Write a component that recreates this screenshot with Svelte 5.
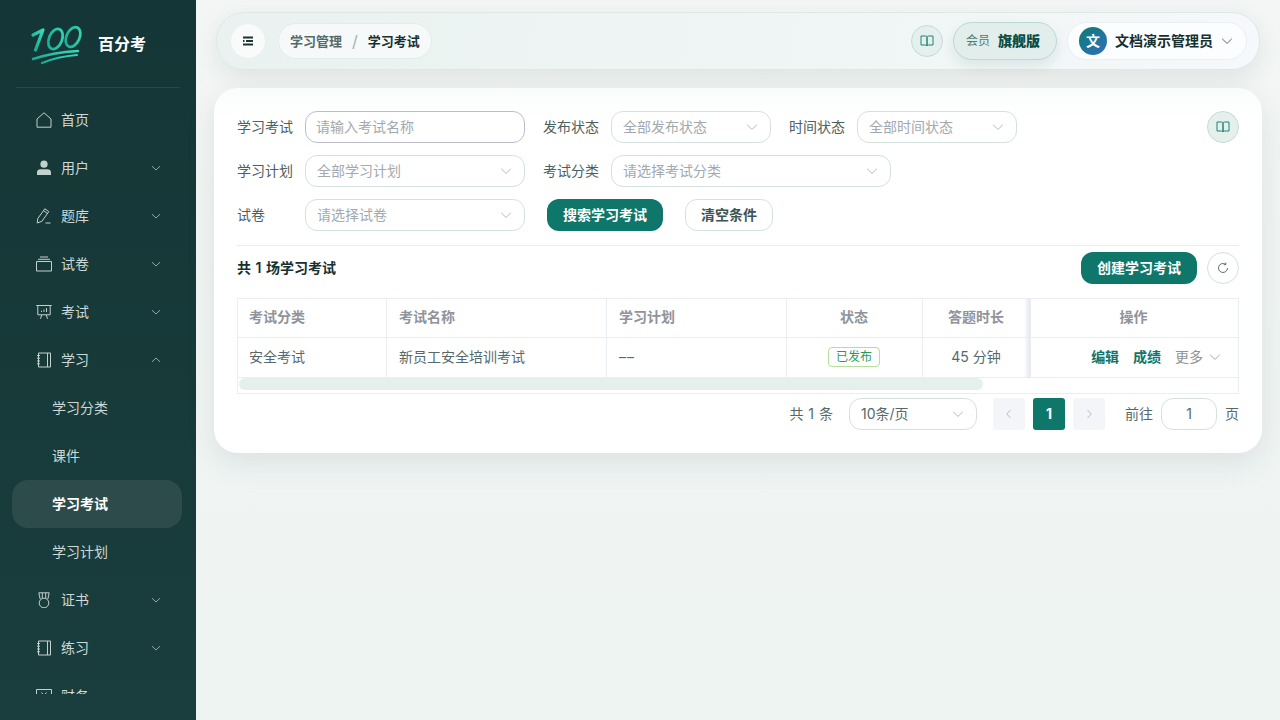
<script>
  const nav = [
    { label: '首页', icon: 'home' },
    { label: '用户', icon: 'user', arrow: 'down' },
    { label: '题库', icon: 'pen', arrow: 'down' },
    { label: '试卷', icon: 'box', arrow: 'down' },
    { label: '考试', icon: 'board', arrow: 'down' },
    { label: '学习', icon: 'note', arrow: 'up' },
    { label: '学习分类', sub: true },
    { label: '课件', sub: true },
    { label: '学习考试', sub: true, active: true },
    { label: '学习计划', sub: true },
    { label: '证书', icon: 'medal', arrow: 'down' },
    { label: '练习', icon: 'note', arrow: 'down' },
    { label: '财务', icon: 'money', arrow: 'down' }
  ];

  const cols = [
    { title: '考试分类', w: 149 },
    { title: '考试名称', w: 220 },
    { title: '学习计划', w: 180 },
    { title: '状态', w: 136, center: true },
    { title: '答题时长', w: 108, center: true },
    { title: '操作', w: 207, center: true }
  ];
</script>

{#snippet chevron(cls = '')}
  <svg class="chev {cls}" viewBox="0 0 12 12"><path d="M1.200 3.800 6 8.400l4.800-4.600" /></svg>
{/snippet}

{#snippet book()}
  <svg class="book" viewBox="0 0 14 14"><path d="M1 2h4.500C6.400 2 7 2.500 7 3.300V12c0-.6-.6-1-1.500-1H1zM13 2H8.500C7.600 2 7 2.500 7 3.300V12c0-.6.6-1 1.500-1H13z" /></svg>
{/snippet}

{#snippet navIcon(name)}
  <svg class="nav-icon" viewBox="0 0 16 16">
    {#if name === 'home'}
      <path d="M1 7 8 .8 15 7v8.200H1z" />
    {:else if name === 'user'}
      <circle class="solid" cx="8" cy="4.200" r="3.600" />
      <path class="solid" d="M1 15v-2.600C1 10.300 2.600 9.200 4.500 9.200h7c1.900 0 3.500 1.100 3.500 3.200V15z" />
    {:else if name === 'pen'}
      <path d="M1.200 15 1.800 10.500 8.800.8l4 2.800-6.900 9.700zM7.500 2.700l4 2.800M9.500 15h5" />
    {:else if name === 'box'}
      <path d="M.5 5.500h15V15H.5zM2 3.300h12M4 1h8" />
    {:else if name === 'board'}
      <path d="M.3 1.500h15.400M1.800 1.500v9.300h12.400V1.500M4.500 14.800l1.200-4M11.500 14.800l-1.200-4M5.500 8V6.800M8 8V5.500M10.500 8V4" />
    {:else if name === 'note'}
      <path d="M2.500 1h12v14h-12zM11.500 1v14M1 3.500h3M1 6.200h3M1 9h3M1 11.800h3" />
    {:else if name === 'medal'}
      <circle cx="8" cy="11" r="4.800" />
      <path d="M4.200 7.200 2.800.8h10.400l-1.400 6.400M6.300 1v5M9.700 1v5" />
    {:else if name === 'money'}
      <path d="M.5 1.500h15v12H.5zM5.500 4.500 8 7.500l2.500-3M5.500 8h5M8 7.500V11" />
    {/if}
  </svg>
{/snippet}

<div class="layout">
  <aside class="sidebar">
    <div class="brand">
      <svg class="logo" viewBox="0 0 52 40">
        <defs>
          <linearGradient id="lg" x1="0" y1="1" x2="1" y2="0">
            <stop offset="0" stop-color="#17a98f" />
            <stop offset="1" stop-color="#3ad6bb" />
          </linearGradient>
        </defs>
        <g fill="none" stroke="url(#lg)" stroke-linecap="round" stroke-linejoin="round">
          <path stroke-width="3.200" d="M3 11 13 6 5.500 26" />
          <ellipse stroke-width="2.700" cx="25.500" cy="15" rx="6.500" ry="10.500" transform="rotate(22 25.500 15)" />
          <ellipse stroke-width="2.700" cx="43" cy="13" rx="6.500" ry="10.500" transform="rotate(24 43 13)" />
          <path stroke-width="2.400" d="M3 35C18 30 32 28 48 27" />
          <path stroke-width="2" d="M12 39C24 34 35 32 47 31" />
        </g>
      </svg>
      <span class="brand-name">百分考</span>
    </div>
    <nav class="menu">
      {#each nav as item}
        <div class="item" class:sub={item.sub} class:active={item.active}>
          {#if item.icon}{@render navIcon(item.icon)}{/if}
          <span class="item-label">{item.label}</span>
          {#if item.arrow}{@render chevron(item.arrow === 'up' ? 'up' : '')}{/if}
        </div>
      {/each}
    </nav>
  </aside>

  <main class="main">
    <header class="topbar">
      <button class="round-btn menu-btn" aria-label="菜单">
        <svg viewBox="0 0 12 12"><path d="M1 2.500h10M4 6h7M1 9.500h10M1 6h1.500" /></svg>
      </button>
      <div class="crumbs">
        <span class="crumb-parent">学习管理</span>
        <span class="crumb-sep">/</span>
        <span class="crumb-current">学习考试</span>
      </div>
      <div class="top-right">
        <button class="book-btn" aria-label="文档">{@render book()}</button>
        <div class="vip"><span class="vip-tag">会员</span><strong>旗舰版</strong></div>
        <div class="account">
          <span class="avatar">文</span>
          <span class="account-name">文档演示管理员</span>
          {@render chevron()}
        </div>
      </div>
    </header>

    <section class="card">
      <div class="filters">
        <div class="filter-row">
          <label class="field-label">学习考试</label>
          <div class="control focus w220">请输入考试名称</div>
          <label class="field-label">发布状态</label>
          <div class="control w160">全部发布状态{@render chevron()}</div>
          <label class="field-label">时间状态</label>
          <div class="control w160">全部时间状态{@render chevron()}</div>
          <button class="book-btn push" aria-label="文档">{@render book()}</button>
        </div>
        <div class="filter-row">
          <label class="field-label">学习计划</label>
          <div class="control w220">全部学习计划{@render chevron()}</div>
          <label class="field-label">考试分类</label>
          <div class="control w280">请选择考试分类{@render chevron()}</div>
        </div>
        <div class="filter-row">
          <label class="field-label">试卷</label>
          <div class="control w220">请选择试卷{@render chevron()}</div>
          <div class="actions">
            <button class="btn primary">搜索学习考试</button>
            <button class="btn ghost">清空条件</button>
          </div>
        </div>
      </div>

      <div class="summary">
        <span class="count">共 1 场学习考试</span>
        <div class="summary-actions">
          <button class="btn primary">创建学习考试</button>
          <button class="refresh" aria-label="刷新">
            <svg viewBox="0 0 12 12"><path d="M10.500 6A4.500 4.500 0 1 1 8.600 2.300M8.800.6v2.100H6.700" /></svg>
          </button>
        </div>
      </div>

      <div class="table-wrap">
        <table>
          <colgroup>
            {#each cols as c}<col style:width="{c.w}px" />{/each}
          </colgroup>
          <thead>
            <tr>
              {#each cols as c, i}
                <th class:center={c.center} class:fixed={i === 5}>{c.title}</th>
              {/each}
            </tr>
          </thead>
          <tbody>
            <tr>
              <td>安全考试</td>
              <td>新员工安全培训考试</td>
              <td><span class="dash">––</span></td>
              <td class="center"><span class="tag">已发布</span></td>
              <td class="center">45 分钟</td>
              <td class="fixed ops">
                <span class="link">编辑</span>
                <span class="link">成绩</span>
                <span class="more">更多{@render chevron()}</span>
              </td>
            </tr>
          </tbody>
        </table>
        <div class="scroll-track"><div class="scroll-thumb"></div></div>
      </div>

      <div class="pager">
        <span class="total">共 1 条</span>
        <div class="control page-size">10条/页{@render chevron()}</div>
        <div class="pages">
          <button class="page" aria-label="上一页"><svg viewBox="0 0 12 12"><path d="M7.500 2 3.800 6l3.700 4" /></svg></button>
          <button class="page on">1</button>
          <button class="page" aria-label="下一页"><svg viewBox="0 0 12 12"><path d="M4.500 2l3.700 4-3.700 4" /></svg></button>
        </div>
        <span class="goto">前往</span>
        <div class="page-input">1</div>
        <span class="goto-unit">页</span>
      </div>
    </section>
  </main>
</div>

<style>
  :global(body) {
    margin: 0;
    font-family: Inter, 'Noto Sans CJK SC', sans-serif;
    font-size: 14px;
    line-height: 20px;
    background: #eff4f3;
    overflow: hidden;
  }

  button {
    font: inherit;
    padding: 0;
    cursor: pointer;
  }

  .layout {
    display: flex;
    height: 720px;
    overflow: hidden;
  }

  /* sidebar */
  .sidebar {
    width: 196px;
    flex: none;
    background: linear-gradient(180deg, #153636, #193e3d);
    color: #cdd9d7;
    display: flex;
    flex-direction: column;
    height: 720px;
  }

  .brand {
    height: 87px;
    margin: 0 16px;
    padding-left: 14px;
    display: flex;
    align-items: center;
    gap: 16px;
    border-bottom: 1px solid #26494a;
    flex: none;
  }

  .logo {
    width: 52px;
    height: 40px;
  }

  .brand-name {
    color: #fff;
    font-size: 16px;
    font-weight: 700;
  }

  .menu {
    margin-top: 8px;
    height: 598px;
    overflow: hidden;
  }

  .item {
    height: 48px;
    margin: 0 14px 0 12px;
    padding: 0 21px 0 24px;
    display: flex;
    align-items: center;
    border-radius: 16px;
  }

  .item.sub {
    padding-left: 40px;
  }

  .item.active {
    background: #2c4b4a;
    color: #fff;
    font-weight: 600;
  }

  .item-label {
    flex: 1;
  }

  .nav-icon {
    width: 16px;
    height: 16px;
    margin-right: 9px;
    fill: none;
    stroke: #c3d0ce;
    stroke-width: 1;
    flex: none;
  }

  .nav-icon .solid {
    fill: #c3d0ce;
    stroke: none;
  }

  .chev {
    width: 12px;
    height: 12px;
    fill: none;
    stroke: currentColor;
    stroke-width: 1;
    flex: none;
  }

  .chev.up {
    transform: rotate(180deg);
  }

  .item .chev {
    width: 10px;
    height: 10px;
    color: #aebdbb;
  }

  /* main */
  .main {
    flex: 1;
    min-width: 0;
    padding: 12px 18px;
    background: linear-gradient(180deg, #f3f6f5, #eef4f2);
  }

  .topbar {
    height: 58px;
    box-sizing: border-box;
    margin: 0 2px 18px;
    padding: 0 12px 0 13px;
    display: flex;
    align-items: center;
    gap: 12px;
    border: 1px solid #dde8e6;
    border-radius: 28px;
    background: linear-gradient(100deg, #e9f2f0, #f1f6f6 70%, #f6f8fb);
    box-shadow: 0 8px 24px rgba(30, 60, 55, 0.09);
  }

  .round-btn {
    width: 36px;
    height: 36px;
    border: 1px solid #e9f0ef;
    border-radius: 50%;
    background: #f9fbfb;
    display: grid;
    place-items: center;
  }

  .menu-btn svg {
    width: 12px;
    height: 12px;
    fill: none;
    stroke: #1c3331;
    stroke-width: 1.800;
  }

  .crumbs {
    height: 36px;
    box-sizing: border-box;
    padding: 0 11px;
    display: flex;
    align-items: center;
    border: 1px solid #e3ecea;
    border-radius: 18px;
    background: #f5f9f9;
    font-size: 13px;
    font-weight: 600;
  }

  .crumb-parent {
    color: #56696a;
  }

  .crumb-sep {
    margin: 0 10px;
    color: #a3b0ae;
    font-weight: 400;
    font-size: 16px;
  }

  .crumb-current {
    color: #17302e;
  }

  .top-right {
    margin-left: auto;
    display: flex;
    align-items: center;
    gap: 10px;
  }

  .book-btn {
    width: 32px;
    height: 32px;
    border: 1px solid #c4dcd8;
    border-radius: 50%;
    background: #e5f0ed;
    display: grid;
    place-items: center;
    flex: none;
  }

  .book {
    width: 14px;
    height: 14px;
    fill: none;
    stroke: #1f8375;
    stroke-width: 1;
  }

  .vip {
    width: 104px;
    height: 38px;
    box-sizing: border-box;
    padding-left: 12px;
    display: flex;
    align-items: center;
    gap: 8px;
    border: 1px solid #bdd8d3;
    border-radius: 19px;
    background: #e2eeeb;
    box-shadow: 0 6px 14px rgba(20, 90, 80, 0.1);
    color: #0d4d44;
    font-weight: 700;
  }

  .vip-tag {
    color: #4c7b72;
    font-size: 12px;
    font-weight: 400;
  }

  .account {
    width: 180px;
    height: 38px;
    box-sizing: border-box;
    padding: 0 13px 0 11px;
    display: flex;
    align-items: center;
    gap: 8px;
    border: 1px solid #e9f0f0;
    border-radius: 19px;
    background: #fcfdfe;
    color: #17302e;
    font-weight: 600;
    white-space: nowrap;
  }

  .account .chev {
    color: #5c6d6c;
    margin-left: auto;
  }

  .avatar {
    width: 28px;
    height: 28px;
    border-radius: 50%;
    background: linear-gradient(135deg, #107a70, #2f70c0);
    color: #fff;
    font-weight: 700;
    display: grid;
    place-items: center;
    flex: none;
  }

  /* card */
  .card {
    height: 365px;
    box-sizing: border-box;
    padding: 23px 23px 0;
    border-radius: 24px;
    background: linear-gradient(180deg, #fafcfb, #fff 30px);
    box-shadow: 0 10px 30px rgba(30, 60, 55, 0.1);
  }

  .filters {
    display: flex;
    flex-direction: column;
    gap: 12px;
  }

  .filter-row {
    display: flex;
    align-items: center;
    height: 32px;
  }

  .field-label {
    width: 56px;
    margin-right: 12px;
    color: #4d6060;
    white-space: nowrap;
  }

  .control {
    height: 32px;
    box-sizing: border-box;
    padding: 0 12px 0 11px;
    margin-right: 18px;
    display: flex;
    align-items: center;
    justify-content: space-between;
    border: 1px solid #d5e1de;
    border-radius: 12px;
    color: #a2a9ae;
    background: #fff;
  }

  .control .chev {
    color: #b3bcbc;
  }

  .w160 { width: 160px; }
  .w220 { width: 220px; }
  .w280 { width: 280px; }

  .control.focus {
    border-color: #bdbccb;
    padding-left: 10px;
  }

  .push {
    margin-left: auto;
  }

  .actions {
    display: flex;
    gap: 22px;
    margin-left: 4px;
  }

  .btn {
    height: 32px;
    border-radius: 12px;
    font-weight: 600;
    white-space: nowrap;
  }

  .btn.primary {
    width: 116px;
    border: none;
    background: #0f766a;
    color: #fff;
  }

  .btn.ghost {
    width: 88px;
    border: 1px solid #d5e1de;
    background: #fff;
    color: #3f5453;
  }

  .summary {
    margin-top: 14px;
    padding-top: 6px;
    height: 32px;
    display: flex;
    align-items: center;
    justify-content: space-between;
    border-top: 1px solid #e8eeed;
  }

  .count {
    font-weight: 600;
    color: #17302e;
    word-spacing: 1px;
  }

  .summary-actions {
    display: flex;
    gap: 10px;
  }

  .refresh {
    width: 32px;
    height: 32px;
    border: 1px solid #d5e1de;
    border-radius: 50%;
    background: #fff;
    display: grid;
    place-items: center;
  }

  .refresh svg {
    width: 12px;
    height: 12px;
    fill: none;
    stroke: #5f6f6e;
    stroke-width: 1;
  }

  /* table */
  .table-wrap {
    margin-top: 14px;
    border: 1px solid #ebedf4;
  }

  table {
    width: 100%;
    table-layout: fixed;
    border-collapse: separate;
    border-spacing: 0;
  }

  th,
  td {
    height: 40px;
    padding: 0 11px 2px 12px;
    box-sizing: border-box;
    text-align: left;
    border-right: 1px solid #ebedf4;
    border-bottom: 1px solid #ebedf4;
    color: #56696a;
    font-weight: 400;
    position: relative;
  }

  th {
    height: 39px;
    color: #909399;
    font-weight: 600;
  }

  th:first-child,
  td:first-child {
    padding-left: 11px;
  }

  th:last-child,
  td:last-child {
    border-right: none;
  }

  th.center,
  td.center {
    padding-right: 13px;
    text-align: center;
  }

  th.fixed {
    padding-right: 14px;
  }

  .fixed::before {
    content: '';
    position: absolute;
    left: -7px;
    top: 0;
    bottom: -1px;
    width: 6px;
    background: linear-gradient(90deg, transparent, #e6e6ee);
  }

  .dash {
    letter-spacing: 1px;
  }

  .tag {
    display: inline-block;
    height: 20px;
    line-height: 18px;
    box-sizing: border-box;
    padding: 0 7px;
    border: 1px solid #b3e19d;
    border-radius: 4px;
    font-size: 12px;
    color: #1f9a63;
    vertical-align: middle;
  }

  td.ops {
    padding-right: 17px;
    text-align: right;
    white-space: nowrap;
  }

  .link {
    color: #0f766a;
    font-weight: 600;
    margin-right: 10px;
  }

  .more {
    color: #8d9495;
  }

  .more .chev {
    margin-left: 6px;
    vertical-align: -1px;
    color: #a4abab;
  }

  .scroll-track {
    height: 15px;
    padding: 0 1px;
  }

  .scroll-thumb {
    width: 744px;
    height: 12px;
    border-radius: 6px;
    background: #e5efec;
  }

  /* pager */
  .pager {
    margin-top: 4px;
    display: flex;
    align-items: center;
    justify-content: flex-end;
    color: #56696a;
    height: 32px;
  }

  .total {
    word-spacing: 1px;
  }

  .page-size {
    width: 128px;
    margin: 0 16px;
    color: #56696a;
  }

  .pages {
    display: flex;
    gap: 8px;
    margin-right: 20px;
  }

  .page {
    width: 32px;
    height: 32px;
    border: none;
    border-radius: 3px;
    background: #f4f5f9;
    display: grid;
    place-items: center;
    font-weight: 700;
  }

  .page svg {
    width: 12px;
    height: 12px;
    fill: none;
    stroke: #b6bcc2;
    stroke-width: 1;
  }

  .page.on {
    background: #0f766a;
    color: #fff;
  }

  .page-input {
    width: 56px;
    height: 32px;
    box-sizing: border-box;
    margin: 0 8px;
    border: 1px solid #d5e1de;
    border-radius: 12px;
    display: grid;
    place-items: center;
  }
</style>
